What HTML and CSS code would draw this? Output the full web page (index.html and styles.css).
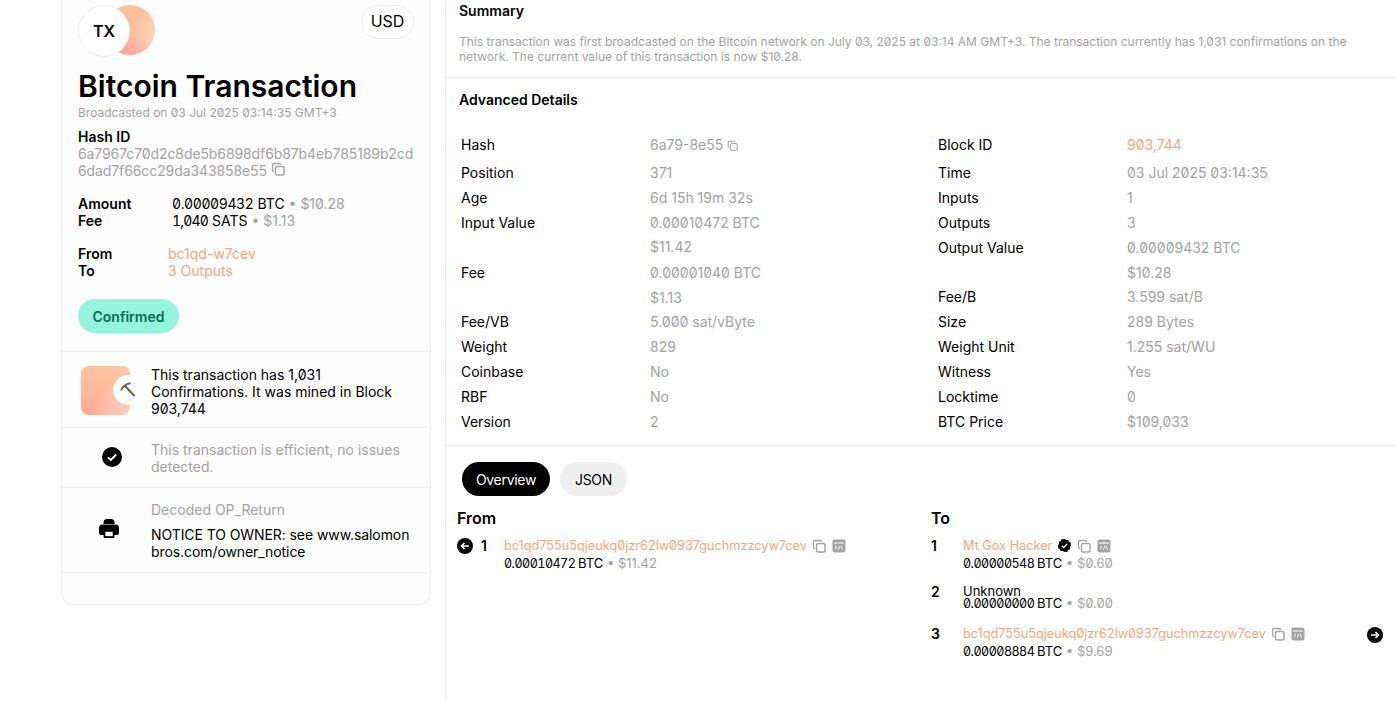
FILE: index.html
```html
<!DOCTYPE html>
<html lang="en">
<head>
<meta charset="utf-8">
<title>Bitcoin Transaction</title>
<link rel="stylesheet" href="styles.css">
</head>
<body>
<svg class="sprites" width="0" height="0" aria-hidden="true">
  <defs>
    <symbol id="copy" viewBox="0 0 14 14">
      <path d="M3 9.500h-.3A1.200 1.200 0 0 1 1.500 8.300V2.700A1.200 1.200 0 0 1 2.700 1.500h5.600A1.200 1.200 0 0 1 9.500 2.700V3" fill="none" stroke="currentColor" stroke-width="1.300"/>
      <rect x="4.500" y="4.500" width="8.500" height="8.500" rx="1.800" fill="none" stroke="currentColor" stroke-width="1.400"/>
    </symbol>
    <symbol id="embed" viewBox="0 0 14 14">
      <rect x=".5" y=".5" width="13" height="13" rx="2" fill="currentColor"/>
      <path d="M2 4h10" stroke="#fff" stroke-width="1"/>
      <path d="M4.400 6.800l-.8 3.600M7.800 6.800l-1.300 3.800M9.200 6.800l1.200 3.600" fill="none" stroke="#fff" stroke-width="1"/>
    </symbol>
  </defs>
</svg>

<div class="page">
  <aside class="card">
    <section class="head">
      <div class="top">
        <div class="logo">
          <span class="logo-back"></span>
          <span class="logo-front">TX</span>
        </div>
        <span class="currency">USD</span>
      </div>
      <h1>Bitcoin Transaction</h1>
      <p class="muted small">Broadcasted on 03 Jul 2025 03:14:35 GMT+3</p>
      <div class="hash">
        <div class="strong">Hash ID</div>
        <div class="muted hash-value">6a7967c70d2c8de5b6898df6b87b4eb785189b2cd<br>6dad7f66cc29da343858e55 <svg class="ic ic-14 raised"><use href="#copy"/></svg></div>
      </div>
      <dl class="facts facts-amount">
        <dt>Amount</dt><dd><span class="ink mono">0.00009432</span> <span class="ink">BTC</span> <span class="dot">•</span> <span class="muted">$10.28</span></dd>
        <dt>Fee</dt><dd><span class="ink mono mono-fee">1,040</span> <span class="ink">SATS</span> <span class="dot">•</span> <span class="muted">$1.13</span></dd>
      </dl>
      <dl class="facts facts-route">
        <dt>From</dt><dd class="link">bc1qd-w7cev</dd>
        <dt>To</dt><dd class="link">3 Outputs</dd>
      </dl>
      <span class="badge">Confirmed</span>
    </section>

    <section class="row row-mined">
      <div class="mined-icon">
        <span class="pick">
          <svg width="16" height="16" viewBox="0 0 16 16"><path d="M1 8.500Q3 3 10.500 1" fill="none" stroke="#6e6e6e" stroke-width="2"/><path d="M5 4l9.500 10" stroke="#6b5a4d" stroke-width="2"/></svg>
        </span>
      </div>
      <p>This transaction has 1,031 Confirmations. It was mined in Block 903,744</p>
    </section>

    <section class="row row-check">
      <div class="row-icon">
        <svg width="20" height="20" viewBox="0 0 20 20"><circle cx="10" cy="10" r="10" fill="#000"/><path d="M6 10.300l2.800 2.700L14.200 7.500" fill="none" stroke="#fff" stroke-width="1.800"/></svg>
      </div>
      <p class="muted">This transaction is efficient, no issues detected.</p>
    </section>

    <section class="row row-op">
      <div class="row-icon">
        <svg width="20" height="20" viewBox="0 0 20 20"><path d="M4.500 4.500A3.500 3.500 0 0 1 8 1h4a3.500 3.500 0 0 1 3.500 3.500V6h-11z" fill="#000"/><path d="M3.500 6.500h13A3.500 3.500 0 0 1 20 10v5a2 2 0 0 1-2 2h-2.500v1.500A1.500 1.500 0 0 1 14 20H6a1.500 1.500 0 0 1-1.500-1.500V17H2a2 2 0 0 1-2-2v-5a3.500 3.500 0 0 1 3.500-3.500z" fill="#000"/><path d="M6.300 13.800h7.400v4.400H6.300z" fill="#fff"/></svg>
      </div>
      <div>
        <p class="muted op-title">Decoded OP_Return</p>
        <p class="op-text">NOTICE TO OWNER: see www.salomon<br>bros.com/owner_notice</p>
      </div>
    </section>
    <div class="card-foot"></div>
  </aside>

  <main class="main">
    <section class="summary">
      <h2>Summary</h2>
      <p class="muted summary-text">This transaction was first broadcasted on the Bitcoin network on July 03, 2025 at 03:14 AM GMT+3. The transaction currently has 1,031 confirmations on the network. The current value of this transaction is now $10.28.</p>
    </section>

    <section class="details">
      <h2>Advanced Details</h2>
      <div class="columns">
        <dl class="spec spec-left">
          <dt class="first">Hash</dt><dd class="first">6a79-8e55 <svg class="ic ic-11"><use href="#copy"/></svg></dd>
          <dt>Position</dt><dd>371</dd>
          <dt>Age</dt><dd>6d 15h 19m 32s</dd>
          <dt>Input Value</dt><dd>0.00010472 BTC</dd>
          <dt></dt><dd class="sub">$11.42</dd>
          <dt>Fee</dt><dd>0.00001040 BTC</dd>
          <dt></dt><dd>$1.13</dd>
          <dt>Fee/VB</dt><dd>5.000 sat/vByte</dd>
          <dt>Weight</dt><dd>829</dd>
          <dt>Coinbase</dt><dd>No</dd>
          <dt>RBF</dt><dd>No</dd>
          <dt>Version</dt><dd>2</dd>
        </dl>
        <dl class="spec spec-right">
          <dt class="first">Block ID</dt><dd class="first link">903,744</dd>
          <dt>Time</dt><dd>03 Jul 2025 03:14:35</dd>
          <dt>Inputs</dt><dd>1</dd>
          <dt>Outputs</dt><dd>3</dd>
          <dt>Output Value</dt><dd>0.00009432 BTC</dd>
          <dt></dt><dd>$10.28</dd>
          <dt>Fee/B</dt><dd>3.599 sat/B</dd>
          <dt>Size</dt><dd>289 Bytes</dd>
          <dt>Weight Unit</dt><dd>1.255 sat/WU</dd>
          <dt>Witness</dt><dd>Yes</dd>
          <dt>Locktime</dt><dd>0</dd>
          <dt>BTC Price</dt><dd>$109,033</dd>
        </dl>
      </div>
    </section>

    <section class="flow">
      <div class="tabs">
        <button class="tab tab-on">Overview</button>
        <button class="tab tab-json">JSON</button>
      </div>
      <div class="flow-cols">
        <div class="flow-from">
          <h3>From</h3>
          <div class="io">
            <svg class="arrow" width="16" height="16" viewBox="0 0 16 16"><circle cx="8" cy="8" r="8" fill="#000"/><path d="M12 8H4.500M7.500 5l-3 3 3 3" fill="none" stroke="#fff" stroke-width="1.700"/></svg>
            <span class="num">1</span>
            <div>
              <div class="addr"><span class="link">bc1qd755u5qjeukq0jzr62lw0937guchmzzcyw7cev</span><svg class="ic tool"><use href="#copy"/></svg><svg class="ic tool"><use href="#embed"/></svg></div>
              <div class="amt"><span class="ink mono">0.00010472</span> <span class="ink">BTC</span> <span class="dot">•</span> <span class="muted">$11.42</span></div>
            </div>
          </div>
        </div>
        <div class="flow-to">
          <h3>To</h3>
          <div class="io">
            <span class="num">1</span>
            <div>
              <div class="addr"><span class="link">Mt Gox Hacker</span><svg class="verified" width="13" height="13" viewBox="0 0 13 13"><path d="M6.500 0l1.700 1.100 2-.1.900 1.800 1.800.9-.1 2L13 6.500l-1.100 1.700.1 2-1.800.9-.9 1.800-2-.1L6.500 13l-1.700-1.100-2 .1-.9-1.800-1.800-.9.1-2L0 6.500l1.100-1.700-.1-2 1.800-.9.9-1.800 2 .1z" fill="#000"/><path d="M3.800 6.700l1.900 1.800 3.500-3.600" fill="none" stroke="#fff" stroke-width="1.300"/></svg><svg class="ic tool"><use href="#copy"/></svg><svg class="ic tool"><use href="#embed"/></svg></div>
              <div class="amt"><span class="ink mono">0.00000548</span> <span class="ink">BTC</span> <span class="dot">•</span> <span class="muted">$0.60</span></div>
            </div>
          </div>
          <div class="io io-tight">
            <span class="num">2</span>
            <div>
              <div class="unknown">Unknown</div>
              <div class="amt amt-tight"><span class="ink mono">0.00000000</span> <span class="ink">BTC</span> <span class="dot">•</span> <span class="muted">$0.00</span></div>
            </div>
          </div>
          <div class="io io-last">
            <span class="num">3</span>
            <div>
              <div class="addr"><span class="link">bc1qd755u5qjeukq0jzr62lw0937guchmzzcyw7cev</span><svg class="ic tool"><use href="#copy"/></svg><svg class="ic tool"><use href="#embed"/></svg></div>
              <div class="amt"><span class="ink mono">0.00008884</span> <span class="ink">BTC</span> <span class="dot">•</span> <span class="muted">$9.69</span></div>
            </div>
            <svg class="arrow arrow-right" width="16" height="16" viewBox="0 0 16 16"><circle cx="8" cy="8" r="8" fill="#000"/><path d="M4 8h7.500M8.500 5l3 3-3 3" fill="none" stroke="#fff" stroke-width="1.700"/></svg>
          </div>
        </div>
      </div>
    </section>
  </main>
</div>
</body>
</html>
```
FILE: styles.css
```css
* { box-sizing: border-box; }
html, body { margin: 0; padding: 0; }
body {
  font-family: Inter, "Liberation Sans", sans-serif;
  font-size: 14px;
  line-height: 17px;
  color: #000;
  background: #fff;
  font-feature-settings: "zero";
  overflow: hidden;
}
p, h1, h2, h3, dl, dd, dt { margin: 0; padding: 0; font-weight: 400; }
.sprites { position: absolute; }
.page { display: flex; height: 701px; padding-left: 61px; }

.muted { color: #a3a3a3; }
.ink { color: #000; }
.link { color: #f4a77c; }
.dot { color: #a3a3a3; }
.mono { font-feature-settings: "zero", "tnum"; letter-spacing: -0.4px; }
.mono-fee { letter-spacing: -0.8px; }
.small { font-size: 12px; line-height: 14px; }
.ic { display: inline-block; color: #a3a3a3; vertical-align: -2px; }
.ic-14 { width: 14px; height: 14px; }
.ic-11 { width: 11px; height: 11px; vertical-align: -1px; }
.raised { vertical-align: 0; }

.card {
  width: 370px;
  height: 605px;
  flex: none;
  background: #fdfdfd;
  border: 1px solid #eeeeee;
  border-top: 0;
  border-radius: 0 0 12px 12px;
}
.head { padding: 5px 16px 0; height: 352px; border-bottom: 1px solid #eeeeee; }
.top { display: flex; justify-content: space-between; align-items: flex-start; }
.logo { position: relative; width: 78px; height: 52px; }
.logo-back {
  position: absolute; left: 27px; top: 0;
  width: 50px; height: 50px; border-radius: 50%;
  background:
    radial-gradient(circle at 100% 60%, rgba(248, 218, 190, 0.95), rgba(248, 218, 190, 0) 50%),
    linear-gradient(180deg, #ffc39c, #ffa99a);
}
.logo-front {
  position: absolute; left: 0; top: 0;
  width: 52px; height: 52px; border-radius: 50%;
  background: #fff; border: 1px solid #eeeeee;
  display: flex; align-items: center; justify-content: center;
  font-size: 16px; font-weight: 600;
}
.currency {
  width: 53px; height: 34px; border: 1px solid #eeeeee; border-radius: 17px;
  background: #fff;
  display: flex; align-items: center; justify-content: center;
  font-size: 16px; padding-bottom: 2px;
}
h1 { font-size: 30px; line-height: 36px; font-weight: 600; margin-top: 11px; }
.small { margin-top: 2px; }
.hash { margin-top: 8px; }
.strong { font-weight: 600; line-height: 17px; }
.hash-value { line-height: 17px; letter-spacing: -0.1px; }
.facts { display: grid; }
.facts dt { font-weight: 600; }
.facts-amount { margin-top: 16px; grid-template-columns: 94px 1fr; }
.facts-route { margin-top: 16px; grid-template-columns: 90px 1fr; }
.badge {
  display: inline-flex; align-items: center; justify-content: center;
  margin-top: 20px; width: 101px; height: 34px; border-radius: 17px;
  background: #94f5dc; color: #0a6b55; font-weight: 600;
}
.row { display: flex; border-bottom: 1px solid #eeeeee; }
.row-mined { height: 76px; padding: 14px 16px 0 19px; gap: 21px; }
.mined-icon {
  position: relative; width: 49px; height: 49px; flex: none; border-radius: 8px;
  background:
    radial-gradient(circle at 100% 100%, rgba(252, 215, 200, 0.9), rgba(252, 215, 200, 0) 55%),
    linear-gradient(190deg, #ffc9a2, #ffa994);
}
.pick {
  position: absolute; left: 32px; top: 9px;
  width: 30px; height: 30px; border-radius: 50%; background: #fff;
  display: flex; align-items: center; justify-content: center;
}
.row-check { height: 60px; padding: 13px 16px 0 0; }
.row-icon { width: 89px; flex: none; display: flex; justify-content: center; padding-left: 11px; }
.row-check .row-icon { padding-top: 6px; }
.row-op { height: 85px; padding: 13px 16px 0 0; }
.row-op .row-icon { padding-top: 17px; padding-left: 5px; }
.op-title { margin-bottom: 8px; }
.op-text { letter-spacing: -0.08px; }
.card-foot { height: 31px; }

.main { flex: 1; margin-left: 14px; border-left: 1px solid #eeeeee; min-width: 0; }
h2 { font-size: 14px; font-weight: 600; line-height: 17px; }
.summary { height: 78px; padding: 2px 16px 0 13px; border-bottom: 1px solid #eeeeee; }
.summary-text { margin-top: 15px; font-size: 12px; line-height: 15px; padding-right: 20px; }
.details { height: 368px; padding: 13px 0 0 13px; border-bottom: 1px solid #eeeeee; }
.columns { display: grid; grid-template-columns: 477px 1fr; margin-top: 24px; margin-left: 2px; }
.spec { display: grid; grid-template-columns: 189px 1fr; align-items: center; }
.spec-left { grid-template-rows: 28px repeat(5, 25px) 24px repeat(5, 25px); }
.spec-right { grid-template-rows: 28px repeat(4, 25px) 24px repeat(6, 25px); }
.spec dd { color: #a3a3a3; }
.spec dd.link { color: #f4a77c; }
.spec .first { height: 28px; align-self: start; padding-top: 4px; }
.spec .sub { align-self: start; padding-top: 3px; }

.flow { padding: 16px 0 0 11px; }
.tabs { display: flex; gap: 10px; margin-left: 5px; }
.tab {
  font: inherit; font-size: 14px; height: 34px; border: 0; border-radius: 17px;
  background: #efefef; color: #000; padding: 0; letter-spacing: -0.3px;
  font-feature-settings: inherit;
}
.tab-on { background: #000; color: #fff; width: 88px; }
.tab-json { width: 67px; }
.flow-cols { display: grid; grid-template-columns: 474px 1fr; margin-top: 13px; }
h3 { font-size: 16px; font-weight: 600; line-height: 19px; margin-bottom: 9px; }
.io { display: flex; position: relative; }
.flow-from .io .num { margin-left: 8px; width: 23px; }
.num { font-weight: 600; width: 32px; flex: none; }
.arrow { flex: none; margin-top: 1px; }
.addr { display: flex; align-items: center; font-size: 12.700px; height: 17px; }
.tool { margin-left: 6px; width: 14px; height: 14px; flex: none; }
.addr .link + .tool { margin-left: 5px; }
.verified { margin-left: 6px; flex: none; }
.amt { font-size: 13px; line-height: 17px; margin-top: 1px; }
.amt .mono { font-size: 12.500px; letter-spacing: -0.5px; margin-right: -1px; }
.io-tight { margin-top: 12px; }
.io-tight .num { margin-top: -1px; }
.unknown { font-size: 13px; line-height: 9px; padding-top: 3px; margin-bottom: -1px; }
.amt-tight { margin-top: 0; }
.io-last { margin-top: 13px; }
.arrow-right { position: absolute; right: 13px; top: 2px; margin: 0; }
```
